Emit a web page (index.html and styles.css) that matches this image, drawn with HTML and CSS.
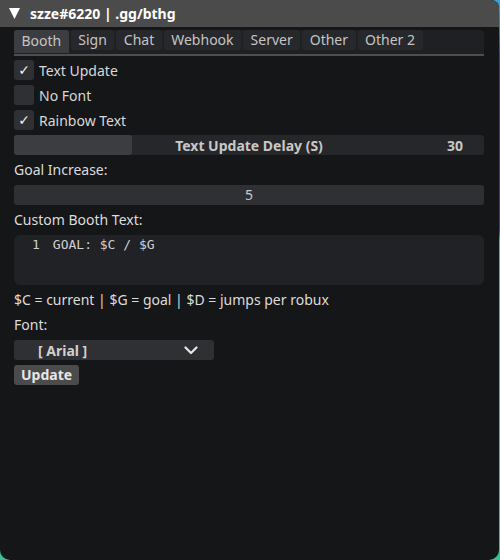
FILE: index.html
```html
<!DOCTYPE html>
<html>
<head>
<meta charset="utf-8">
<link rel="stylesheet" href="styles.css">
</head>
<body>
<div class="window">
  <div class="titlebar">
    <svg class="tri" width="11" height="11" viewBox="0 0 11 11"><polygon points="0,0 11,0 5.5,11" fill="#ffffff"/></svg>
    <span class="title">szze#6220 | .gg/bthg</span>
  </div>
  <div class="content">
    <div class="tabs">
      <div class="tab active">Booth</div>
      <div class="tab">Sign</div>
      <div class="tab">Chat</div>
      <div class="tab">Webhook</div>
      <div class="tab">Server</div>
      <div class="tab">Other</div>
      <div class="tab">Other 2</div>
    </div>
    <div class="sep"></div>
    <div class="items">
      <div class="check"><span class="box">✓</span><span>Text Update</span></div>
      <div class="check"><span class="box"></span><span>No Font</span></div>
      <div class="check"><span class="box">✓</span><span>Rainbow Text</span></div>
      <div class="slider">
        <div class="fill" style="width:118px"></div>
        <span class="slabel">Text Update Delay (S)</span>
        <span class="sval">30</span>
      </div>
      <div class="label">Goal Increase:</div>
      <div class="input">5</div>
      <div class="label">Custom Booth Text:</div>
      <div class="code"><span class="ln">1</span><span>GOAL: $C / $G</span></div>
      <div class="label">$C = current | $G = goal | $D = jumps per robux</div>
      <div class="label">Font:</div>
      <div class="dropdown">
        <span>[ Arial ]</span>
        <svg width="14" height="9" viewBox="0 0 14 9"><polyline points="1.5,1.5 7,7 12.5,1.5" fill="none" stroke="#e6e6e6" stroke-width="2.2" stroke-linecap="round" stroke-linejoin="round"/></svg>
      </div>
      <div class="button">Update</div>
    </div>
  </div>
</div>
</body>
</html>
```
FILE: styles.css
```css
html, body {
  margin: 0;
  padding: 0;
  width: 500px;
  height: 560px;
  overflow: hidden;
}
body {
  background: linear-gradient(180deg, #3aa0d8 0px, #4a3a7a 60px, #4a3a7a 230px, #3fbf8f 240px, #3fbf8f 560px);
  font-family: "Noto Sans", "Open Sans", sans-serif;
  font-size: 14px;
  color: #dcdcdc;
}
.window {
  width: 499px;
  height: 560px;
  background: #151618;
  border-radius: 0 8px 10px 10px;
  overflow: hidden;
  display: flex;
  flex-direction: column;
}
.titlebar {
  height: 27px;
  background: #4b4b4b;
  display: flex;
  align-items: center;
  padding-left: 9px;
  gap: 10px;
  flex-shrink: 0;
}
.title {
  color: #ffffff;
  font-weight: bold;
  font-size: 14px;
}
.content {
  padding: 3px 15px 0 14px;
  display: flex;
  flex-direction: column;
}
.tabs {
  display: flex;
  align-items: flex-start;
  gap: 2px;
  height: 24px;
  background: #1f2023;
  border-radius: 3px 4px 0 0;
}
.tab {
  background: #27282b;
  color: #c4c4c4;
  padding: 0 7.5px;
  height: 20px;
  line-height: 20px;
  border-radius: 3px;
}
.tab.active {
  background: #3c3d41;
  height: 23px;
  line-height: 22px;
  border-radius: 3px 3px 0 0;
}
.sep {
  height: 2px;
  background: #4e4e50;
  margin-bottom: 4px;
}
.items {
  display: flex;
  flex-direction: column;
  gap: 5px;
}
.check {
  display: flex;
  align-items: center;
  gap: 5px;
  height: 20px;
  line-height: 19px;
  color: #d8d8d8;
}
.box {
  width: 20px;
  height: 20px;
  background: #2f3033;
  border-radius: 3px;
  display: flex;
  align-items: center;
  justify-content: center;
  color: #eeeeee;
  font-size: 14px;
  font-family: "DejaVu Sans", sans-serif;
}
.slider {
  position: relative;
  height: 20px;
  background: #26272a;
  border-radius: 3px;
  display: flex;
  align-items: center;
  justify-content: center;
  font-weight: bold;
  color: #c8c8c8;
}
.fill {
  position: absolute;
  left: 0;
  top: 0;
  bottom: 0;
  background: #3c3d41;
  border-radius: 3px;
}
.slabel {
  position: relative;
}
.sval {
  position: absolute;
  right: 21px;
}
.label {
  height: 20px;
  line-height: 20px;
  color: #dcdcdc;
}
.input {
  height: 20px;
  line-height: 20px;
  background: #2f3034;
  border-radius: 3px;
  text-align: center;
  color: #c8c8c8;
}
.code {
  height: 50px;
  background: #212225;
  border-radius: 6px;
  font-family: "DejaVu Sans Mono", monospace;
  font-size: 13px;
  line-height: 17px;
  color: #d0d0d0;
  padding: 1px 0 0 18px;
  box-sizing: border-box;
  display: flex;
  gap: 13px;
}
.dropdown {
  width: 200px;
  height: 20px;
  background: #2f3034;
  border-radius: 3px;
  display: flex;
  align-items: center;
  justify-content: space-between;
  padding: 0 16px 0 24px;
  box-sizing: border-box;
  font-weight: bold;
  color: #d0d0d0;
}
.button {
  align-self: flex-start;
  height: 20px;
  line-height: 20px;
  background: #4b4b4b;
  border-radius: 3px;
  padding: 0 7px;
  font-weight: bold;
  color: #e6e6e6;
}
```
